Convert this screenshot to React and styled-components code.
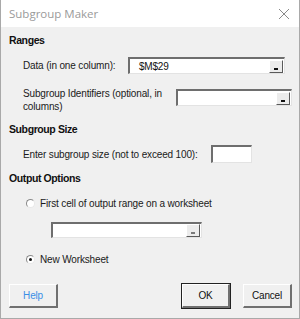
import styled, { createGlobalStyle } from "styled-components";

const Global = createGlobalStyle`
  html, body { margin: 0; padding: 0; background: #ffffff; }
  body { font-family: "Liberation Sans", Arial, sans-serif; }
`;

const Window = styled.div`
  width: 300px;
  height: 319px;
  box-sizing: border-box;
  border: 1px solid #a9a9a9;
  border-top: none;
  background: #f0f0f0;
  display: flex;
  flex-direction: column;
  overflow: hidden;
`;

const TitleBar = styled.div`
  height: 27px;
  background: #ffffff;
  display: flex;
  align-items: center;
  justify-content: space-between;
  padding: 0 9px 0 8px;
  flex-shrink: 0;
`;

const Title = styled.span`
  font-family: "Open Sans", "Noto Sans", sans-serif;
  font-size: 11.5px;
  color: #9a9a9a;
`;

const Body = styled.div`
  display: flex;
  flex-direction: column;
  padding: 0 7px 0 8px;
  flex: 1;
`;

const Heading = styled.div`
  font-family: "Liberation Sans", Arial, sans-serif;
  font-weight: bold;
  font-size: 10.5px;
  letter-spacing: -0.4px;
  color: #111;
  line-height: 14px;
  margin-top: ${(p) => p.$top}px;
`;

const Row = styled.div`
  display: flex;
  align-items: ${(p) => p.$align || "center"};
  margin-top: ${(p) => p.$top}px;
  padding-left: ${(p) => p.$indent || 14}px;
`;

const Label = styled.span`
  font-family: "Liberation Sans", Arial, sans-serif;
  font-size: 10px;
  letter-spacing: -0.15px;
  color: #1a1a1a;
  line-height: 13px;
  white-space: nowrap;
  width: ${(p) => (p.$w ? `${p.$w}px` : "auto")};
  flex-shrink: 0;
`;

const Field = styled.div`
  width: ${(p) => p.$w}px;
  height: ${(p) => p.$h || 17}px;
  margin-top: ${(p) => p.$mt || 0}px;
  box-sizing: border-box;
  background: #ffffff;
  border-top: 2px solid #6e6e6e;
  border-left: 2px solid #6e6e6e;
  border-right: 1px solid #e3e3e3;
  border-bottom: 1px solid #e3e3e3;
  display: flex;
  align-items: center;
  justify-content: space-between;
  padding-left: 9px;
  flex-shrink: 0;
`;

const FieldText = styled.span`
  font-family: "Liberation Sans", Arial, sans-serif;
  font-size: 10px;
  letter-spacing: -0.2px;
  color: #111;
`;

const Picker = styled.div`
  width: 14px;
  height: 13px;
  box-sizing: border-box;
  background: #ececec;
  border-top: 1px solid #ffffff;
  border-left: 1px solid #ffffff;
  border-right: 1px solid #5a5a5a;
  border-bottom: 1px solid #5a5a5a;
  margin-right: 1px;
  display: flex;
  align-items: flex-end;
  justify-content: center;
  padding-bottom: 2px;
  &::after {
    content: "";
    width: 4px;
    height: 2px;
    background: ${(p) => (p.$faded ? "#7a7a7a" : "#111")};
  }
`;

const Radio = styled.span`
  width: 9px;
  height: 9px;
  border-radius: 50%;
  box-sizing: border-box;
  border: 1px solid #8a8a8a;
  border-right-color: #e8e8e8;
  border-bottom-color: #e8e8e8;
  background: #ffffff;
  display: inline-flex;
  align-items: center;
  justify-content: center;
  margin-right: 5px;
  flex-shrink: 0;
  &::after {
    content: "";
    width: 3px;
    height: 3px;
    border-radius: 50%;
    background: ${(p) => (p.$checked ? "#111" : "transparent")};
  }
`;

const Footer = styled.div`
  display: flex;
  align-items: center;
  margin-top: ${(p) => p.$top}px;
`;

const Button = styled.div`
  width: ${(p) => p.$w}px;
  height: 24px;
  box-sizing: border-box;
  background: #f0f0f0;
  border-top: 1px solid #ffffff;
  border-left: 1px solid #ffffff;
  border-right: 2px solid #707070;
  border-bottom: 2px solid #707070;
  outline: ${(p) => (p.$default ? "1px solid #222" : "none")};
  display: flex;
  align-items: center;
  justify-content: center;
  font-family: "Liberation Sans", Arial, sans-serif;
  font-size: 10px;
  letter-spacing: -0.2px;
  color: ${(p) => p.$color || "#111"};
  margin-left: ${(p) => p.$ml || 0}px;
`;

const CloseIcon = () => (
  <svg width="12" height="12" viewBox="0 0 12 12">
    <path d="M1 1 L11 11 M11 1 L1 11" stroke="#8a8a8a" strokeWidth="1" fill="none" />
  </svg>
);

export default function App() {
  return (
    <>
      <Global />
      <Window>
        <TitleBar>
          <Title>Subgroup Maker</Title>
          <CloseIcon />
        </TitleBar>
        <Body>
          <Heading $top={6}>Ranges</Heading>
          <Row $top={10}>
            <Label $w={105}>Data (in one column):</Label>
            <Field $w={157}>
              <FieldText>$M$29</FieldText>
              <Picker />
            </Field>
          </Row>
          <Row $top={13} $align="flex-start">
            <Label $w={153}>
              Subgroup Identifiers (optional, in
              <br />
              columns)
            </Label>
            <Field $w={116} $mt={2}>
              <FieldText />
              <Picker />
            </Field>
          </Row>
          <Heading $top={9}>Subgroup Size</Heading>
          <Row $top={9}>
            <Label $w={188}>Enter subgroup size (not to exceed 100):</Label>
            <Field $w={41} $h={18} />
          </Row>
          <Heading $top={8}>Output Options</Heading>
          <Row $top={12} $indent={17}>
            <Radio />
            <Label>First cell of output range on a worksheet</Label>
          </Row>
          <Row $top={12} $indent={42}>
            <Field $w={151} $h={16}>
              <FieldText />
              <Picker $faded />
            </Field>
          </Row>
          <Row $top={15} $indent={17}>
            <Radio $checked />
            <Label>New Worksheet</Label>
          </Row>
          <Footer $top={18}>
            <Button $w={50} $color="#3a8ee6">Help</Button>
            <Button $w={49} $ml={124} $default>OK</Button>
            <Button $w={50} $ml={13}>Cancel</Button>
          </Footer>
        </Body>
      </Window>
    </>
  );
}
